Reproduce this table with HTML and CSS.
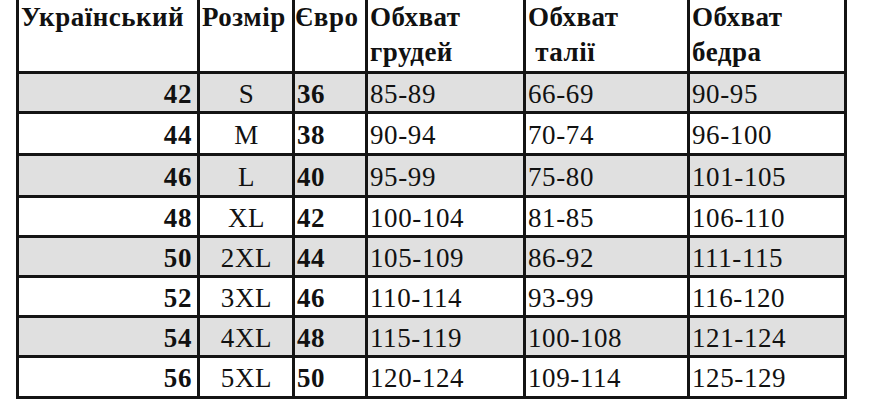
FILE: index.html
```html
<!DOCTYPE html>
<html lang="uk">
<head>
<meta charset="utf-8">
<title>Таблиця розмірів</title>
<link rel="stylesheet" href="styles.css">
</head>
<body>
<div class="sizes">
  <div class="h">Український</div>
  <div class="h">Розмір</div>
  <div class="h eu-h">Євро</div>
  <div class="h">Обхват<br>грудей</div>
  <div class="h">Обхват<br>&nbsp;талії</div>
  <div class="h">Обхват<br>бедра</div>

  <div class="c ua g">42</div><div class="c sz g">S</div><div class="c eu g">36</div><div class="c g">85-89</div><div class="c g">66-69</div><div class="c g">90-95</div>
  <div class="c ua">44</div><div class="c sz">M</div><div class="c eu">38</div><div class="c">90-94</div><div class="c">70-74</div><div class="c">96-100</div>
  <div class="c ua g">46</div><div class="c sz g">L</div><div class="c eu g">40</div><div class="c g">95-99</div><div class="c g">75-80</div><div class="c g">101-105</div>
  <div class="c ua">48</div><div class="c sz">XL</div><div class="c eu">42</div><div class="c">100-104</div><div class="c">81-85</div><div class="c">106-110</div>
  <div class="c ua g">50</div><div class="c sz g">2XL</div><div class="c eu g">44</div><div class="c g">105-109</div><div class="c g">86-92</div><div class="c g">111-115</div>
  <div class="c ua">52</div><div class="c sz">3XL</div><div class="c eu">46</div><div class="c">110-114</div><div class="c">93-99</div><div class="c">116-120</div>
  <div class="c ua g">54</div><div class="c sz g">4XL</div><div class="c eu g">48</div><div class="c g">115-119</div><div class="c g">100-108</div><div class="c g">121-124</div>
  <div class="c ua">56</div><div class="c sz">5XL</div><div class="c eu">50</div><div class="c">120-124</div><div class="c">109-114</div><div class="c">125-129</div>
</div>
</body>
</html>
```

FILE: styles.css
```css
html, body {
  margin: 0;
  padding: 0;
  background: #ffffff;
}

body {
  font-family: "Liberation Serif", "Times New Roman", serif;
  color: #111111;
}

.sizes {
  display: grid;
  grid-template-columns: 178px 92px 70px 155px 161px 154px;
  grid-template-rows: 71px 37px 39px 39px 37px 37px 37px 37px 38px;
  gap: 3px;
  padding: 0 3px 3px 3px;
  margin-left: 16px;
  width: max-content;
  background: #141414;
}

.h {
  background: #ffffff;
  font-weight: bold;
  font-size: 27px;
  letter-spacing: 0.5px;
  line-height: 35px;
  padding: 0 0 0 2px;
  white-space: nowrap;
}

.h.eu-h {
  padding-left: 0;
}

.c {
  background: #ffffff;
  font-size: 27px;
  letter-spacing: 0.6px;
  display: flex;
  align-items: center;
  padding: 3px 1px 0 2px;
}

.c.g {
  background: #e0e0e0;
}

.ua {
  font-weight: bold;
  justify-content: flex-end;
  padding-right: 5px;
}

.sz {
  justify-content: center;
}

.eu {
  font-weight: bold;
}
```
